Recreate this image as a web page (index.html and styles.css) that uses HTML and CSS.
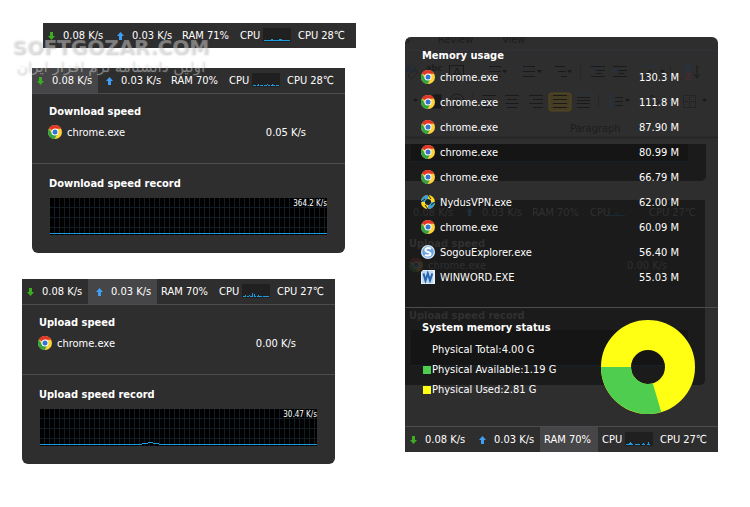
FILE: index.html
```html
<!DOCTYPE html>
<html lang="en">
<head>
    <meta charset="UTF-8">
    <meta name="viewport" content="width=device-width, initial-scale=1.0">
    <title>Traffic Monitor</title>
    <link rel="stylesheet" href="styles.css">
</head>
<body>
    <svg class="sprites" aria-hidden="true">
        <symbol id="down" viewBox="0 0 7 8"><path d="M2 0h3v4h2L3.500 8 0 4h2z" fill="#3aae1e"/></symbol>
        <symbol id="up" viewBox="0 0 7 8"><path d="M2 8h3V4h2L3.500 0 0 4h2z" fill="#3f9ef5"/></symbol>
        <symbol id="chrome" viewBox="0 0 14 14">
            <circle cx="7" cy="7" r="7" fill="#ffd23a"/>
            <path d="M7 7L.9 3.5A7 7 0 0 1 13.1 3.7L7 3.8z" fill="#e2362b"/>
            <path d="M.9 3.5A7 7 0 0 0 6.6 14L9.6 8.6 7 7 4 8.4z" fill="#35a344"/>
            <circle cx="7" cy="7" r="3.5" fill="#fff"/>
            <circle cx="7" cy="7" r="2.5" fill="#3474d0"/>
        </symbol>
        <symbol id="nydus" viewBox="0 0 14 14">
            <circle cx="7" cy="7" r="5" fill="none" stroke="#ffd91c" stroke-width="4"/>
            <path d="M7 2A5 5 0 0 0 2 7M7 12A5 5 0 0 0 12 7" fill="none" stroke="#3e9fd6" stroke-width="4"/>
            <path d="M7 0l3 4M0 7l4-3M7 14l-3-4M14 7l-4 3" stroke="#1c1c1c"/>
            <path d="M6 4l4 2-2 4-4-2z" fill="#16242e"/>
        </symbol>
        <symbol id="sogou" viewBox="0 0 14 14">
            <circle cx="7" cy="7" r="7" fill="#dbe9f8"/>
            <circle cx="7" cy="7" r="5.8" fill="#6ba4df"/>
            <path d="M10 3.8C7 2.2 4 3.5 4.4 5.5 4.8 7.2 9.5 6.8 9.6 8.8 9.7 10.8 6 11 4 9.8" fill="none" stroke="#fff" stroke-width="2"/>
        </symbol>
        <symbol id="word" viewBox="0 0 14 14">
            <path d="M2 0h12v14H0V2z" fill="#e5eff9"/>
            <path d="M1 1h11v12H1z" fill="#bcd7ef"/>
            <path d="M2.5 3.5l2 7 2.3-7 2.2 7 2.3-7" fill="none" stroke="#2563ae" stroke-width="2"/>
        </symbol>
    </svg>

    <main>
        <div class="column">
            <section class="widget widget-bar">
                <div class="bar">
                    <button class="item speed"><svg class="arrow"><use href="#down"/></svg>0.08 K/s</button>
                    <button class="item speed up"><svg class="arrow"><use href="#up"/></svg>0.03 K/s</button>
                    <button class="item ram">RAM 71%</button>
                    <button class="item cpu">CPU<svg class="mini" viewBox="0 0 28 14"><path d="M1 12.5h26M8 11.5h2M16 11.5h3"/></svg></button>
                    <button class="item temp">CPU 28℃</button>
                </div>
            </section>

            <section class="widget widget-download">
                <div class="bar">
                    <button class="item speed active"><svg class="arrow"><use href="#down"/></svg>0.08 K/s</button>
                    <button class="item speed up"><svg class="arrow"><use href="#up"/></svg>0.03 K/s</button>
                    <button class="item ram">RAM 70%</button>
                    <button class="item cpu">CPU<svg class="mini" viewBox="0 0 28 14"><path d="M1 12.5h3M5 12.5h2M8 12.5h3M12 12.5h3M16 12.5h2M19 12.5h4M24 12.5h3M6 11.5h1M15 11.5h1M20 11.5h1"/></svg></button>
                    <button class="item temp">CPU 28℃</button>
                </div>
                <div class="block processes">
                    <h2>Download speed</h2>
                    <table>
                        <tr><td class="icon"><svg><use href="#chrome"/></svg></td><td>chrome.exe</td><td class="value">0.05 K/s</td></tr>
                    </table>
                </div>
                <div class="block record">
                    <h2>Download speed record</h2>
                    <div class="chart">
                        <svg viewBox="0 0 277 37" preserveAspectRatio="none"><path d="M0 35.5h277"/></svg>
                        <span>364.2 K/s</span>
                    </div>
                </div>
            </section>

            <section class="widget widget-upload">
                <div class="bar">
                    <button class="item speed"><svg class="arrow"><use href="#down"/></svg>0.08 K/s</button>
                    <button class="item speed up active"><svg class="arrow"><use href="#up"/></svg>0.03 K/s</button>
                    <button class="item ram">RAM 70%</button>
                    <button class="item cpu">CPU<svg class="mini" viewBox="0 0 28 14"><path d="M1 12.5h3M5 12.5h2M8 12.5h3M12 12.5h2M15 12.5h5M21 12.5h6M3 11.5h1M7 11.5h1M10.5 13V9M12.5 13v-3M16 11.5h1"/></svg></button>
                    <button class="item temp">CPU 27℃</button>
                </div>
                <div class="block processes">
                    <h2>Upload speed</h2>
                    <table>
                        <tr><td class="icon"><svg><use href="#chrome"/></svg></td><td>chrome.exe</td><td class="value">0.00 K/s</td></tr>
                    </table>
                </div>
                <div class="block record">
                    <h2>Upload speed record</h2>
                    <div class="chart">
                        <svg viewBox="0 0 277 37" preserveAspectRatio="none"><path d="M0 35.5h102M102 34.5h6M108 33.5h5M113 34.5h6M119 35.5h158"/></svg>
                        <span>30.47 K/s</span>
                    </div>
                </div>
            </section>
        </div>

        <section class="widget widget-memory">
            <!-- windows that show through the panel -->
            <svg class="behind" aria-hidden="true">
                <path d="M0 13.500h313" stroke="#30313a"/>
                <path d="M0 100.500h313" stroke="#252627" stroke-width="2"/>
                <g class="ribbon-text"><text x="0" y="6">s</text><text x="33" y="6">Review</text><text x="97" y="6">View</text><text x="165" y="95">Paragraph</text></g>
                <rect x="144" y="56" width="22" height="18" rx="2" fill="#463d22" stroke="#554820"/>
                <g fill="none" stroke="#181a1b">
                    <rect x="44.500" y="28.500" width="14" height="14"/><path d="M48 40l4-9 4 9M49 37h6"/>
                    <path d="M3 39l6-7 4 3-6 7z" stroke="#222425"/>
                    <path d="M84 29.500h12M84 34.500h12M84 39.500h12M118 29.500h12M118 34.500h12M118 39.500h12M150 29.500h10M153 34.500h8M156 39.500h6"/>
                    <path d="M77 58.500h14M77 62.500h10M77 66.500h14M77 70.500h10M100 58.500h14M102 62.500h10M100 66.500h14M102 70.500h10M124 58.500h14M128 62.500h10M124 66.500h14M128 70.500h10M148 58.500h14M148 62.500h14M148 66.500h14M148 70.500h14M172 60.500h13M172 63.500h13M172 66.500h13M172 70.500h13"/>
                    <path d="M186 29.500h14M191 33.500h9M191 36.500h6M186 39.500h14M208 29.500h14M213 33.500h9M213 36.500h6M208 39.500h14M210 60.500h8M210 64.500h8M210 68.500h8M239 41l6-8 6 8M292 28v12M289 37l3 4 3-4"/>
                    <circle cx="52" cy="64" r="7"/><circle cx="52" cy="64" r="3"/><rect x="28" y="58" width="8" height="13" fill="#181a1b"/><path d="M247 58l7 7-6 6-7-6z"/>
                    <path d="M278.500 58.500h12v12h-12zM284.500 58v12M278 64.500h12" stroke-dasharray="1 1"/>
                </g>
                <g fill="none" stroke="#243344">
                    <path d="M78 29.500h2M78 34.500h2M78 39.500h2M112 29.500h2M112 34.500h2M112 39.500h2M146 29.500h2M149 34.500h2M152 39.500h2M190 34.500h-5M188 32l-3 2.500 3 2.500M207 34.500h5M209 32l3 2.500-3 2.500M205.500 57v14M203 60l2.500-3 2.500 3M203 68l2.500 3 2.500-3M172 57.500h13M240 29.500h14"/>
                    <path d="M67.500 56v16M175.500 28v16M193.500 57v14M265.500 28v16" stroke="#262728"/>
                </g>
                <path d="M97 33h5l-2.500 3zM132 33h5l-2.500 3zM162 33h5l-2.500 3zM8 62h5l-2.500 3zM220 62h5l-2.500 3zM255 33h5l-2.500 3zM297 62h5l-2.500 3z" fill="#191919"/>
                <g class="sort"><text x="0" y="35" fill="#222a36">Aa</text><text x="21" y="34" fill="#1c1d1e">abc</text><text x="280" y="34" fill="#263247">A</text><text x="280" y="43" fill="#482a34">Z</text></g>
                <path d="M0 107h301v32a5 5 0 0 1-5 5H0zM0 163h300v180a5 5 0 0 1-5 5H0z" fill="#1b1b1b"/>
                <path d="M6 107h277v17H6zM6 293h277v36H6z" fill="#151515"/>
                <path d="M6 124.500h277M6 328.500h277" stroke="#16222a"/>
                <path d="M204 178.500h16M210 176.500h3" stroke="#182a36"/>
                <g class="ghost-text">
                    <text x="8" y="179">0.08 K/s</text><text x="77" y="179">0.03 K/s</text><text x="127" y="179">RAM 70%</text><text x="185" y="179">CPU</text><text x="244" y="179">CPU 27℃</text>
                    <text class="bold" x="4" y="210">Upload speed</text><text x="23" y="232">chrome.exe</text><text x="222" y="232">0.00 K/s</text>
                    <text class="bold" x="4" y="282">Upload speed record</text>
                </g>
                <use href="#up" x="61" y="171" width="7" height="8" opacity=".15"/>
                <use href="#chrome" x="4" y="221" width="14" height="14" opacity=".12"/>
            </svg>

            <div class="block memory-list">
                <h2>Memory usage</h2>
                <table>
                    <tr><td class="icon"><svg><use href="#chrome"/></svg></td><td>chrome.exe</td><td class="value">130.3 M</td></tr>
                    <tr><td class="icon"><svg><use href="#chrome"/></svg></td><td>chrome.exe</td><td class="value">111.8 M</td></tr>
                    <tr><td class="icon"><svg><use href="#chrome"/></svg></td><td>chrome.exe</td><td class="value">87.90 M</td></tr>
                    <tr><td class="icon"><svg><use href="#chrome"/></svg></td><td>chrome.exe</td><td class="value">80.99 M</td></tr>
                    <tr><td class="icon"><svg><use href="#chrome"/></svg></td><td>chrome.exe</td><td class="value">66.79 M</td></tr>
                    <tr><td class="icon"><svg><use href="#nydus"/></svg></td><td>NydusVPN.exe</td><td class="value">62.00 M</td></tr>
                    <tr><td class="icon"><svg><use href="#chrome"/></svg></td><td>chrome.exe</td><td class="value">60.09 M</td></tr>
                    <tr><td class="icon"><svg><use href="#sogou"/></svg></td><td>SogouExplorer.exe</td><td class="value">56.40 M</td></tr>
                    <tr><td class="icon"><svg><use href="#word"/></svg></td><td>WINWORD.EXE</td><td class="value">55.03 M</td></tr>
                </table>
            </div>
            <div class="block memory-status">
                <div>
                    <h2>System memory status</h2>
                    <ul>
                        <li>Physical Total:4.00 G</li>
                        <li class="available">Physical Available:1.19 G</li>
                        <li class="used">Physical Used:2.81 G</li>
                    </ul>
                </div>
                <svg class="donut" viewBox="0 0 94 94">
                    <circle cx="47" cy="47" r="32" stroke="#ffff13"/>
                    <path d="M56 77.700A32 32 0 0 1 15 47" stroke="#4fcd4f"/>
                </svg>
            </div>
            <div class="bar">
                <button class="item speed"><svg class="arrow"><use href="#down"/></svg>0.08 K/s</button>
                <button class="item speed up"><svg class="arrow"><use href="#up"/></svg>0.03 K/s</button>
                <button class="item ram active">RAM 70%</button>
                <button class="item cpu">CPU<svg class="mini" viewBox="0 0 28 14"><path d="M1 12.500h7M10 12.500h5M17 12.500h3M22 12.500h3M4 11.500h3M5.500 13v-3M18 11.500h1M23.500 13v-3"/></svg></button>
                <button class="item temp">CPU 27℃</button>
            </div>
        </section>
    </main>

    <div class="watermark">
        <b>SOFTGOZAR.COM</b>
        <span lang="fa" dir="rtl">اولین دانشنامه نرم افزار ایران</span>
    </div>
</body>
</html>
```

FILE: styles.css
```css
:root {
    --panel: #2f2e2f;
    --active: #464547;
    --line: #4c4b4e;
    --blue: #1c9ce0;
    --text: #ffffff;
}

* {
    box-sizing: border-box;
}

body {
    margin: 0;
    background-color: #fff;
    color: var(--text);
    font-family: "DejaVu Sans Condensed", "DejaVu Sans", "Noto Sans CJK SC", sans-serif;
    font-stretch: condensed;
    font-size: 11px;
    line-height: 16px;
    position: relative;
}

.sprites {
    display: none;
}

svg {
    display: block;
}

main {
    display: grid;
    grid-template-columns: 334fr 313fr;
    column-gap: 49px;
    align-items: start;
    padding: 23px 32px 43px 22px;
}

.widget {
    background-color: var(--panel);
}

.widget-bar {
    margin-left: 21px;
}

.widget-download {
    margin: 20px 11px 0 10px;
    border-radius: 0 0 6px 6px;
}

.widget-upload {
    margin: 26px 21px 0 0;
    border-radius: 0 0 6px 6px;
}

.widget-memory {
    position: relative;
    margin-top: 14px;
    border-radius: 6px 6px 0 0;
    overflow: hidden;
}

/* taskbar row */
.bar {
    display: grid;
    grid-template-columns: 66fr 69fr 58fr 58fr 62fr;
    height: 25px;
}

.item {
    display: flex;
    align-items: center;
    padding: 1px 0 0 4px;
    border: 0;
    background: none;
    color: inherit;
    font: inherit;
    text-align: left;
    white-space: nowrap;
}

.item.active {
    background-color: var(--active);
}

.item.speed {
    padding-left: 5px;
}

.item.up {
    padding-left: 8px;
}

.arrow {
    width: 7px;
    height: 8px;
    margin-right: 8px;
}

.mini {
    width: 28px;
    height: 14px;
    margin: 0 0 2px 3px;
    background-color: #202020;
    stroke: var(--blue);
}

/* panel contents */
.block {
    border-top: 1px solid var(--line);
    padding: 10px 18px 0 17px;
}

h2 {
    margin: 0;
    font-size: 11px;
    line-height: 16px;
}

table {
    width: 100%;
    border-collapse: collapse;
}

td {
    height: 25px;
    padding: 0;
}

td.icon {
    width: 18px;
}

td.icon svg {
    width: 14px;
    height: 14px;
    margin: 0 0 2px -1px;
}

td.value {
    padding-right: 21px;
    text-align: right;
}

.processes {
    height: 70px;
}

.record {
    padding-top: 12px;
    padding-bottom: 18px;
}

.chart {
    position: relative;
    height: 37px;
    margin: 6px 0 0 1px;
    background:
        repeating-linear-gradient(to right, transparent 0 4px, #131c23 4px 5px),
        repeating-linear-gradient(to bottom, #000 0 9px, #131c23 9px 10px);
}

.chart svg {
    width: 100%;
    height: 100%;
    stroke: var(--blue);
}

.chart span {
    position: absolute;
    top: 0;
    right: 0;
    font-size: 8px;
    line-height: 11px;
}

/* memory panel */
.behind {
    position: absolute;
    top: 0;
    left: 0;
    width: 100%;
    height: 100%;
}

.ribbon-text {
    fill: #1c1d1e;
    font-size: 11px;
}

.ghost-text {
    fill: #303030;
}

.ghost-text .bold {
    font-weight: bold;
}

.sort {
    font-size: 9px;
    font-weight: bold;
}

.widget-memory .block,
.widget-memory .bar {
    position: relative;
}

.memory-list {
    border-top: 0;
    padding-top: 11px;
    padding-bottom: 17px;
}

.memory-list table {
    margin-top: 1px;
}

.memory-status {
    display: flex;
    justify-content: space-between;
    padding: 12px 23px 12px 17px;
}

.memory-status ul {
    list-style: none;
    margin: 4px 0 0;
    padding: 0;
}

.memory-status li {
    display: flex;
    align-items: center;
    height: 20px;
}

.memory-status li::before {
    content: "";
    width: 8px;
    height: 8px;
    margin: 0 1px;
}

.memory-status .available::before {
    background-color: #4fcd4f;
}

.memory-status .used::before {
    background-color: #ffff13;
}

.donut {
    width: 94px;
    height: 94px;
    fill: none;
    stroke-width: 30px;
}

.widget-memory .bar {
    border-top: 1px solid var(--line);
    background-color: var(--panel);
    height: 26px;
}

.watermark {
    position: absolute;
    top: 36px;
    left: 12px;
    display: flex;
    flex-direction: column;
    align-items: center;
    color: rgba(245, 245, 245, 0.4);
    font-family: "DejaVu Sans", sans-serif;
    font-stretch: normal;
    text-shadow: 1px 1px 2px rgba(90, 90, 90, 0.3);
    white-space: nowrap;
    pointer-events: none;
}

.watermark b {
    font-size: 20px;
    line-height: 22px;
}

.watermark span {
    font-size: 15px;
    line-height: 18px;
}
```
